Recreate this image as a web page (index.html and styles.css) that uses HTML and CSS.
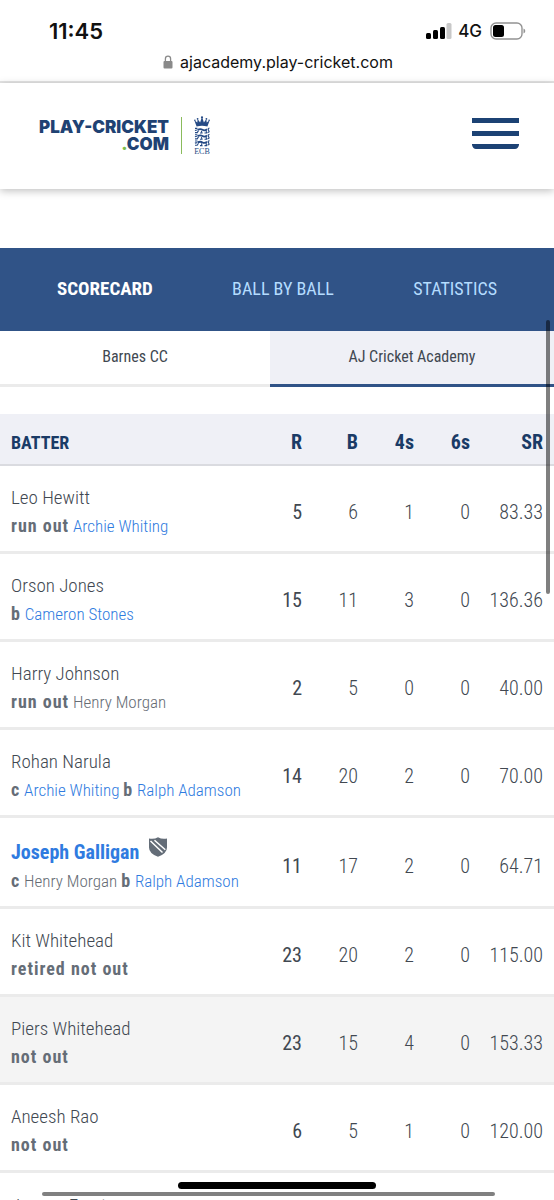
FILE: index.html
```html
<!DOCTYPE html>
<html lang="en">
<head>
<meta charset="utf-8">
<meta name="viewport" content="width=device-width, initial-scale=1">
<title>Play-Cricket scorecard</title>
<link rel="stylesheet" href="styles.css">
</head>
<body>
<div class="screen">
  <div class="browser">
    <div class="status">
      <span class="clock">11:45</span>
      <div class="signals">
        <svg class="bars" width="26" height="16" viewBox="0 0 26 16" aria-hidden="true">
          <rect x="0" y="10" width="5" height="6" rx="1.5" fill="#000"/>
          <rect x="7" y="7" width="5" height="9" rx="1.5" fill="#000"/>
          <rect x="14" y="4" width="5" height="12" rx="1.5" fill="#000"/>
          <rect x="20.500" y="0" width="5" height="16" rx="1.5" fill="#c8c8c8"/>
        </svg>
        <span class="network">4G</span>
        <svg width="36" height="18" viewBox="0 0 36 18" aria-hidden="true">
          <rect x="1" y="1" width="31" height="16" rx="5" fill="none" stroke="#939393" stroke-width="1.4"/>
          <rect x="3" y="3" width="11" height="12" rx="2.5" fill="#000"/>
          <path d="M33.5 6.5q1.8 .8 1.8 2.5t-1.8 2.5z" fill="#939393"/>
        </svg>
      </div>
    </div>
    <div class="address">
      <svg width="10" height="14" viewBox="0 0 10 14" aria-hidden="true">
        <rect x="0.5" y="6" width="9" height="7.5" rx="1" fill="#8a8a8a"/>
        <path d="M2.4 6.5V3.8a2.6 2.6 0 0 1 5.2 0v2.7" fill="none" stroke="#8a8a8a" stroke-width="1.3"/>
      </svg>
      <span>ajacademy.play-cricket.com</span>
    </div>
  </div>

  <header class="masthead">
    <a class="brand" href="#">
      <span class="wordmark"><span>PLAY-CRICKET</span><span><i>.</i>COM</span></span>
      <span class="divider"></span>
      <svg class="crest" width="16" height="38" viewBox="0 0 16 38" aria-label="ECB" role="img">
        <g fill="#254a85">
          <path d="M2.6 10.5 .3 4.2l3 2.4.3-3.6 2.5 3.4L8 .8l1.9 5.6L12.400 3l.3 3.600 3-2.400-2.300 6.300q-5.400-1.400-10.800 0z"/>
          <circle cx="8" cy="1.300" r="1.100"/><circle cx="3.600" cy="2.800" r=".9"/><circle cx="12.400" cy="2.800" r=".9"/><circle cx=".9" cy="4.200" r=".8"/><circle cx="15.100" cy="4.200" r=".8"/>
        </g>
        <g fill="none" stroke="#254a85">
          <g id="lion">
            <path d="M3.500 13.800q3-1.300 5 0t4.500-.6" stroke-width="1.800"/>
            <path d="M1 12.400h2.400M1 16.600h2.200l1.300-2M6 17h2l-.6-2.200M10.500 17h2l-.5-3M13.500 16.700l1.600-1-1-2.800 1.300-1M.9 14.500l2-.5" stroke-width="1.100"/>
          </g>
          <use href="#lion" y="6.300"/>
          <use href="#lion" y="12.600"/>
        </g>
        <text class="ecb" x="8" y="37.500" text-anchor="middle">ECB</text>
      </svg>
    </a>
    <button class="menu" type="button" aria-label="Menu">
      <svg width="47" height="31" viewBox="0 0 47 31" aria-hidden="true">
        <path d="M0 0h47v5H0zM0 13h47v5H0zM0 26h47v1q-1 4-4 4H4q-3 0-4-4z" fill="#1c4274"/>
      </svg>
    </button>
  </header>

  <nav class="sections">
    <a class="current" href="#">SCORECARD</a>
    <a href="#">BALL BY BALL</a>
    <a href="#">STATISTICS</a>
  </nav>
  <div class="teams">
    <button type="button">Barnes CC</button>
    <button type="button" class="chosen">AJ Cricket Academy</button>
  </div>

  <table class="batting">
    <colgroup><col><col class="num"><col class="num"><col class="num"><col class="num"><col class="rate"></colgroup>
    <thead>
      <tr><th scope="col">BATTER</th><th scope="col">R</th><th scope="col">B</th><th scope="col">4s</th><th scope="col">6s</th><th scope="col">SR</th></tr>
    </thead>
    <tbody>
      <tr><td><div class="name">Leo Hewitt</div><div class="how"><b>run out</b> <a href="#">Archie Whiting</a></div></td><td>5</td><td>6</td><td>1</td><td>0</td><td>83.33</td></tr>
      <tr><td><div class="name">Orson Jones</div><div class="how"><b>b</b> <a href="#">Cameron Stones</a></div></td><td>15</td><td>11</td><td>3</td><td>0</td><td>136.36</td></tr>
      <tr><td><div class="name">Harry Johnson</div><div class="how"><b>run out</b> Henry Morgan</div></td><td>2</td><td>5</td><td>0</td><td>0</td><td>40.00</td></tr>
      <tr><td><div class="name">Rohan Narula</div><div class="how"><b>c</b> <a href="#">Archie Whiting</a> <b>b</b> <a href="#">Ralph Adamson</a></div></td><td>14</td><td>20</td><td>2</td><td>0</td><td>70.00</td></tr>
      <tr class="tall"><td><div class="name captain"><a href="#">Joseph Galligan</a>
        <svg width="18" height="20" viewBox="0 0 18 20" aria-hidden="true">
          <path d="M0 1.500Q5 2.500 9 .3q4 2.200 9 1.200v9q0 6-9 9.300Q0 16.500 0 10.500z" fill="#646d78"/>
          <path d="M1.500 4 13.500 15.500M5.500 3.200 16.300 12.800" stroke="#fff" stroke-width="1.500"/>
        </svg></div><div class="how"><b>c</b> Henry Morgan <b>b</b> <a href="#">Ralph Adamson</a></div></td><td>11</td><td>17</td><td>2</td><td>0</td><td>64.71</td></tr>
      <tr><td><div class="name">Kit Whitehead</div><div class="how"><b>retired not out</b></div></td><td>23</td><td>20</td><td>2</td><td>0</td><td>115.00</td></tr>
      <tr class="shaded"><td><div class="name">Piers Whitehead</div><div class="how"><b>not out</b></div></td><td>23</td><td>15</td><td>4</td><td>0</td><td>153.33</td></tr>
      <tr><td><div class="name">Aneesh Rao</div><div class="how"><b>not out</b></div></td><td>6</td><td>5</td><td>1</td><td>0</td><td>120.00</td></tr>
      <tr><td><div class="name">Jensen Frost</div><div class="how"></div></td><td></td><td></td><td></td><td></td><td></td></tr>
    </tbody>
  </table>

  <div class="scroll-y"></div>
  <div class="scroll-x"></div>
  <div class="home"></div>
</div>
</body>
</html>
```
FILE: styles.css
```css
* { box-sizing: border-box; }
body {
  margin: 0;
  background: #fff;
  color: #414851;
  font-family: "Roboto Condensed", "Liberation Sans Narrow", "Liberation Sans", sans-serif;
}
a { color: inherit; text-decoration: none; }
button { border: 0; padding: 0; background: none; font: inherit; color: inherit; }
svg { display: block; flex: none; }
.screen { position: relative; height: 100vh; overflow: hidden; }

.browser {
  height: 83px;
  padding-top: 18px;
  border-bottom: 2px solid #e5e5e5;
  font-family: Inter, sans-serif;
  color: #111;
}
.status { display: flex; justify-content: space-between; align-items: center; height: 25px; padding: 0 28px 0 49px; }
.clock { font-size: 22px; line-height: 24px; font-weight: 600; }
.signals { display: flex; align-items: center; gap: 6px; }
.network { font-size: 17px; font-weight: 500; margin-right: 2px; }
.address { display: flex; justify-content: center; align-items: center; gap: 7px; height: 37px; padding-left: 2px; font-size: 16px; }

.masthead {
  display: flex;
  justify-content: space-between;
  align-items: center;
  height: 106px;
  padding: 0 35px 5px 39px;
  box-shadow: 0 2px 8px rgba(0, 0, 0, .25);
}
.brand { display: flex; align-items: center; gap: 12px; }
.wordmark { display: flex; flex-direction: column; align-items: flex-end; padding-top: 4px; font: 900 17px/17px Inter, sans-serif; color: #1f4273; }
.wordmark i { font-style: normal; color: #7fbd4b; }
.divider { width: 1px; height: 37px; margin-top: 3px; background: #8abb5c; }
.crest { margin-top: 3px; }
.ecb { font: 8px "Liberation Serif", serif; fill: #254a85; }

.sections {
  display: flex;
  justify-content: space-between;
  align-items: center;
  height: 83px;
  margin-top: 59px;
  padding: 0 57px 2px;
  background: #305387;
  color: #b4dcff;
}
.sections a { font-size: 18px; }
.sections .current { color: #fff; font-size: 19px; font-weight: 700; }

.teams { display: grid; grid-template-columns: 270fr 284fr; height: 56px; font-size: 16px; }
.teams button { padding-bottom: 2px; border-bottom: 3px solid #ebebeb; }
.teams .chosen { background: #eff0f6; border-color: #305387; }

.batting { width: 100%; margin-top: 27px; border-collapse: separate; border-spacing: 0; table-layout: fixed; font-size: 20px; }
.num { width: 56px; }
.rate { width: 84px; }
th, td { padding: 0; text-align: right; border-bottom: 3px solid #ebebeb; }
th { height: 52px; padding-top: 6px; background: #eff0f6; border-bottom: 2px solid #dadbe0; color: #1a3b66; font-weight: 700; }
td { height: 88px; padding-top: 7px; font-weight: 300; }
td:nth-child(2) { font-weight: 400; }
th:first-child, td:first-child { padding-left: 11px; text-align: left; white-space: nowrap; }
th:first-child { font-size: 18px; }
th:last-child, td:last-child { padding-right: 11px; }
.name { font-size: 19px; line-height: 28px; }
.how { min-height: 27px; color: #666c74; font-size: 17px; line-height: 27px; }
.how b { color: #656d77; font-size: 18px; font-weight: 700; letter-spacing: 1px; }
.how a, .captain { color: #2f7be0; }
.captain { display: flex; gap: 10px; font-size: 20px; font-weight: 700; line-height: 30px; }
.tall td { height: 91px; }
.shaded { background: #f4f4f4; }

.scroll-y { position: absolute; top: 320px; right: 4px; width: 4px; height: 274px; border-radius: 2px; background: rgba(0, 0, 0, .5); }
.scroll-x { position: absolute; bottom: 4px; left: 42px; right: 59px; height: 4px; border-radius: 2px; background: #808080; }
.home { position: absolute; bottom: 11px; left: 178px; right: 178px; height: 7px; border-radius: 4px; background: #000; }
```
